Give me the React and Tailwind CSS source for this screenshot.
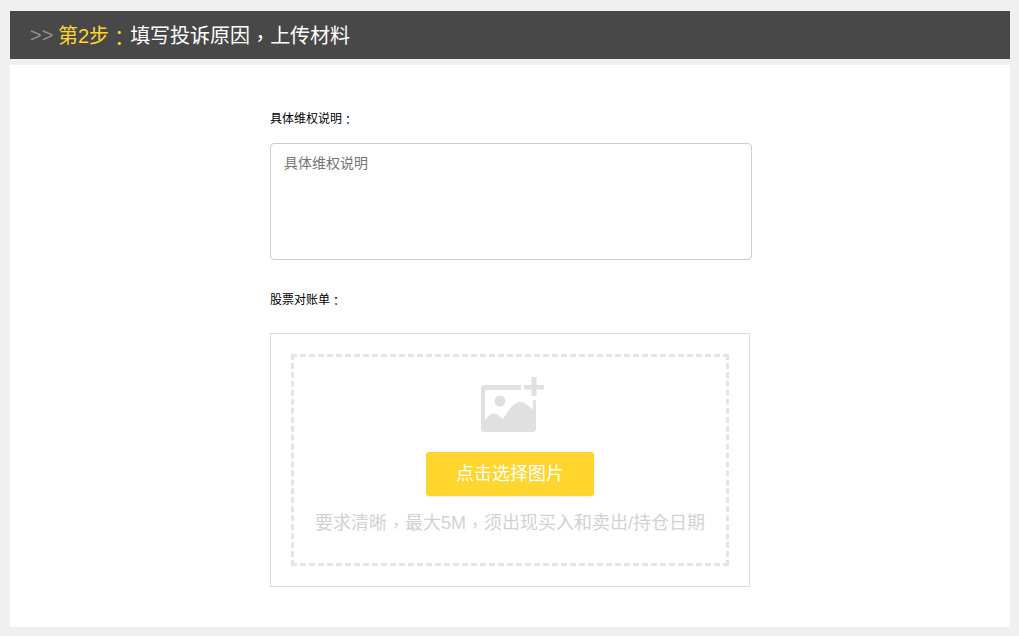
const Punct = ({ children }) => (
  <span className="inline-block translate-y-[0.15em] font-['Noto_Sans_CJK_TC','Liberation_Sans',sans-serif]">
    {children}
  </span>
);

export default function App() {
  return (
    <div className="min-h-[636px] bg-[#f0f0f0] pl-[10px] pr-[9px] pt-[11px] pb-[9px] font-['Liberation_Sans','Noto_Sans_CJK_SC',sans-serif]">
      <div className="flex h-[48px] items-center bg-[#484848] pl-[20px] text-[20px] leading-[48px]">
        <span className="w-[28px] text-[#8f8f8f]">&gt;&gt;</span>
        <span className="h-[48px] text-[#ffd52e]">
          第2步<Punct>：</Punct>
        </span>
        <span className="ml-[1px] h-[48px] text-white">
          填写投诉原因<Punct>，</Punct>上传材料
        </span>
      </div>
      <div className="mt-[6px] h-[562px] bg-white pl-[260px] pt-[45px]">
        <div className="h-[16px] text-[12px] leading-[16px] text-black">
          具体维权说明<Punct>：</Punct>
        </div>
        <textarea
          readOnly
          placeholder="具体维权说明"
          className="mt-[17px] block h-[117px] w-[482px] resize-none rounded-[4px] border border-[#cccccc] px-[13px] py-[9px] text-[14px] leading-[20px] outline-none placeholder:text-[#757575]"
        />
        <div className="mt-[31px] h-[16px] text-[12px] leading-[16px] text-black">
          股票对账单<Punct>：</Punct>
        </div>
        <div className="mt-[26px] h-[254px] w-[480px] border border-[#d9d9d9] p-[20px]">
          <div className="flex h-[212px] flex-col items-center border-[3px] border-dashed border-[#e4e4e4] pt-[20px]">
            <svg width="64" height="55" viewBox="0 0 64 55" className="ml-[6px] block shrink-0">
              <path
                fill="#e0e0e0"
                d="M3 8H40V13H5.500C4.600 13 4 13.600 4 14.500V43C6 40.500 9.500 36.500 13 36.500C16 36.500 19 40 22 42C26 36 32 25 39 25C44 25 49 30 52 33V23H55V52C55 53.700 53.700 55 52 55H3C1.300 55 0 53.700 0 52V11C0 9.300 1.300 8 3 8Z"
              />
              <circle cx="19" cy="24" r="5.500" fill="#e0e0e0" />
              <path fill="#e0e0e0" d="M50.500 0H55.500V8H63V12.500H55.500V19H50.500V12.500H43V8H50.500Z" />
            </svg>
            <button className="mt-[20px] h-[44px] w-[168px] shrink-0 rounded-[3px] bg-[#ffd52e] pt-[1px] text-[18px] text-white shadow-[0_1px_2px_rgba(0,0,0,0.08)]">
              点击选择图片
            </button>
            <div className="mt-[12px] h-[26px] whitespace-nowrap text-[18px] leading-[26px] text-[#d2d2d2]">
              要求清晰<Punct>，</Punct>最大5M<Punct>，</Punct>须出现买入和卖出/持仓日期
            </div>
          </div>
        </div>
      </div>
    </div>
  );
}
